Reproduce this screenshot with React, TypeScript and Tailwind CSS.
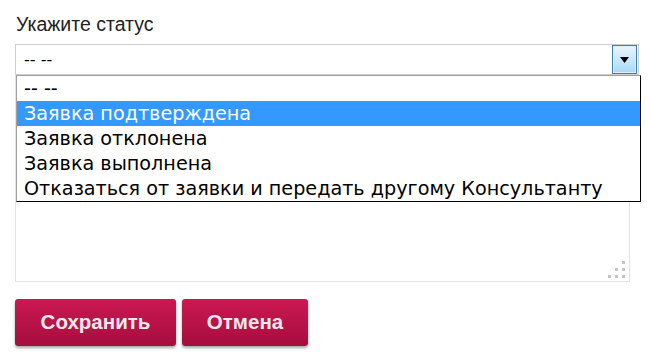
import React from 'react';

const options = [
  '-- --',
  'Заявка подтверждена',
  'Заявка отклонена',
  'Заявка выполнена',
  'Отказаться от заявки и передать другому Консультанту',
];

const ArrowButton: React.FC = () => (
  <div className="flex h-[29px] w-[25px] items-center justify-center border border-[#3c7fb1] bg-gradient-to-b from-[#eaf6fd] to-[#a7d9f5] shadow-[inset_0_0_0_1px_#d8effc]">
    <svg width="9" height="6" viewBox="0 0 9 6">
      <path d="M0 0h9L4.5 6z" fill="#000" />
    </svg>
  </div>
);

const ResizeGrip: React.FC = () => (
  <svg width="18" height="18" viewBox="0 0 18 18">
    {[
      [14, 2],
      [7, 9],
      [14, 9],
      [0, 16],
      [7, 16],
      [14, 16],
    ].map(([x, y], i) => (
      <rect key={i} x={x} y={y - 1} width="3" height="3" fill="#c4c4c4" />
    ))}
  </svg>
);

export default function App() {
  return (
    <div className="min-h-screen bg-white pl-[15px] pt-[13px] font-['Liberation_Sans',Arial,sans-serif]">
      <div className="h-[22px] pl-[1px] text-[19.5px] leading-[22px] text-[#222]">Укажите статус</div>

      <div className="relative mt-[9px] w-[624px]">
        <div className="flex h-[31px] items-center justify-between border border-[#cfcfcf] bg-white pl-[8px] pr-[1px] font-['DejaVu_Sans',sans-serif] text-[16px] text-black">
          <span>-- --</span>
          <ArrowButton />
        </div>

        <ul className="absolute left-[1px] top-[31px] z-10 w-[625px] border border-[#a0a0a0] border-b-black border-r-black bg-white font-['DejaVu_Sans',sans-serif]">
          {options.map((opt, i) => (
            <li
              key={opt}
              className={`h-[25px] whitespace-nowrap pl-[7px] text-[19.2px] leading-[25px] ${
                i === 1 ? 'bg-[#3399ff] text-white' : 'text-black'
              }`}
            >
              {opt}
            </li>
          ))}
        </ul>
      </div>

      <div className="flex h-[207px] w-[615px] items-end justify-end border border-[#dde3ea] bg-white p-[3px]">
        <ResizeGrip />
      </div>

      <div className="mt-[17px] flex gap-[6px]">
        <button className="h-[47px] w-[161px] rounded-[3px] bg-gradient-to-b from-[#cc1852] to-[#a50e3e] text-[20.5px] font-bold text-[#f7e8ee] shadow-[0_2px_3px_rgba(0,0,0,0.35)]">
          Сохранить
        </button>
        <button className="h-[47px] w-[126px] rounded-[3px] bg-gradient-to-b from-[#cc1852] to-[#a50e3e] text-[20.5px] font-bold text-[#f7e8ee] shadow-[0_2px_3px_rgba(0,0,0,0.35)]">
          Отмена
        </button>
      </div>
    </div>
  );
}
